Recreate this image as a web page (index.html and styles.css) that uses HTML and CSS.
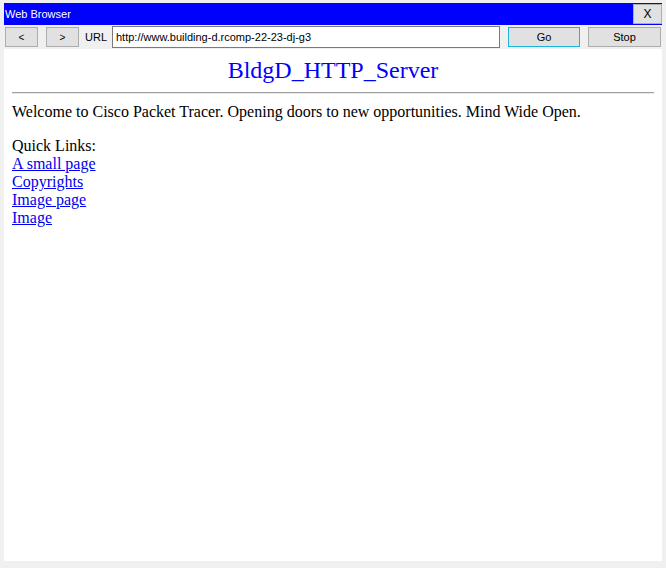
FILE: index.html
```html
<!DOCTYPE html>
<html>
<head>
<meta charset="utf-8">
<title>Web Browser</title>
<link rel="stylesheet" href="styles.css">
</head>
<body>
<div class="window">
  <div class="titlebar">
    <span class="title">Web Browser</span>
    <button class="btn close">X</button>
  </div>
  <div class="toolbar">
    <button class="btn nav">&lt;</button>
    <button class="btn nav fwd">&gt;</button>
    <span class="url-label">URL</span>
    <div class="url">http://www.building-d.rcomp-22-23-dj-g3</div>
    <button class="btn go">Go</button>
    <button class="btn stop">Stop</button>
  </div>
  <div class="content">
    <h1 class="heading">BldgD_HTTP_Server</h1>
    <hr class="rule">
    <p class="welcome">Welcome to Cisco Packet Tracer. Opening doors to new opportunities. Mind Wide Open.</p>
    <div class="links">
      <div>Quick Links:</div>
      <a href="#">A small page</a><br>
      <a href="#">Copyrights</a><br>
      <a href="#">Image page</a><br>
      <a href="#">Image</a>
    </div>
  </div>
</div>
</body>
</html>
```
FILE: styles.css
```css
html, body {
  margin: 0;
  padding: 0;
  background: #f0f0f0;
}
.window {
  margin: 3px 0 0 4px;
  width: 658px;
  height: 558px;
  display: flex;
  flex-direction: column;
  font-family: "Liberation Sans", Arial, sans-serif;
  font-size: 11px;
}
.titlebar {
  height: 22px;
  background: #0000ff;
  display: flex;
  align-items: flex-start;
  justify-content: space-between;
  padding: 1px 0 0 1px;
  box-sizing: border-box;
}
.title {
  color: #ffffff;
  line-height: 20px;
}
.btn {
  font-family: "Liberation Sans", Arial, sans-serif;
  font-size: 11px;
  color: #000;
  background: #e1e1e1;
  border: 1px solid #adadad;
  padding: 0;
  margin: 0;
  height: 20px;
  box-sizing: border-box;
}
.close {
  width: 29px;
  font-size: 12px;
}
.toolbar {
  height: 24px;
  display: flex;
  align-items: center;
  padding-left: 1px;
}
.nav {
  width: 33px;
  font-size: 10px;
}
.fwd {
  margin-left: 8px;
}
.url-label {
  margin-left: 6px;
  width: 27px;
}
.url {
  width: 388px;
  height: 22px;
  box-sizing: border-box;
  border: 1px solid #7a7a7a;
  background: #fff;
  padding-left: 3px;
  line-height: 20px;
}
.go {
  margin-left: 8px;
  width: 72px;
  border-color: #1ab4dc;
}
.stop {
  margin-left: 8px;
  width: 73px;
}
.content {
  flex: 1;
  background: #ffffff;
  padding: 0 8px;
  font-family: "Liberation Serif", "Times New Roman", serif;
  font-size: 16px;
  line-height: 18px;
}
.heading {
  margin: 7px 0 8px;
  font-size: 24px;
  line-height: 28px;
  font-weight: normal;
  text-align: center;
  color: #0000ff;
}
.rule {
  margin: 0;
  height: 0;
  border: none;
  border-top: 1px solid #a0a0a0;
  border-bottom: 1px solid #e8e8e8;
}
.welcome {
  margin: 9px 0 16px;
}
.links a {
  color: #0000ee;
}
```
